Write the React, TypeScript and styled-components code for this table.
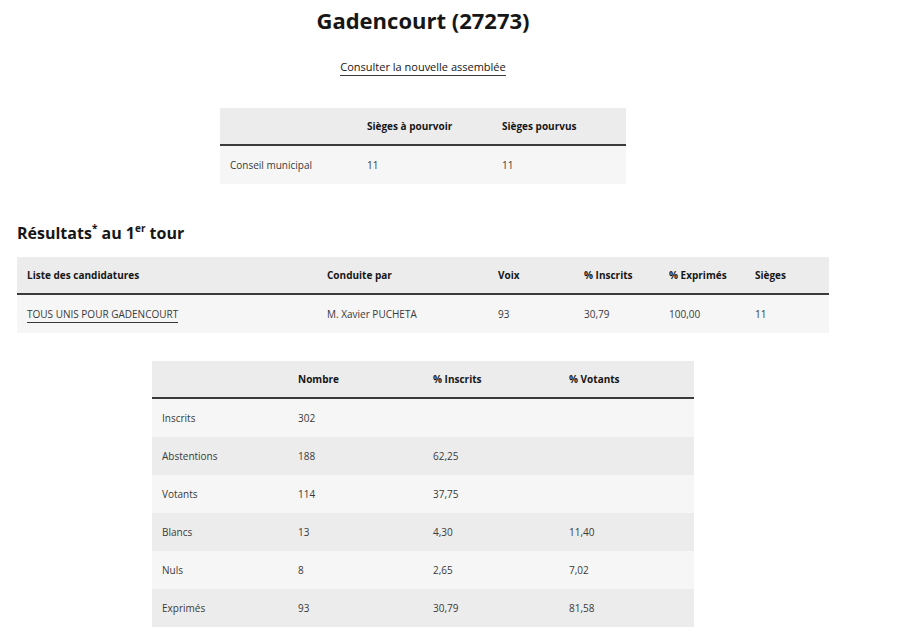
import React from 'react';
import styled, { createGlobalStyle } from 'styled-components';

const GlobalStyle = createGlobalStyle`
  body {
    margin: 0;
    background: #ffffff;
    font-family: 'Open Sans', 'Noto Sans', sans-serif;
    color: #3a3a3a;
  }
`;

type Col = { label: string; width: number };

const sieges: Col[] = [
  { label: '', width: 137 },
  { label: 'Sièges à pourvoir', width: 135 },
  { label: 'Sièges pourvus', width: 134 },
];

const listes: Col[] = [
  { label: 'Liste des candidatures', width: 300 },
  { label: 'Conduite par', width: 171 },
  { label: 'Voix', width: 86 },
  { label: '% Inscrits', width: 85 },
  { label: '% Exprimés', width: 86 },
  { label: 'Sièges', width: 84 },
];

const participation: Col[] = [
  { label: '', width: 136 },
  { label: 'Nombre', width: 135 },
  { label: '% Inscrits', width: 136 },
  { label: '% Votants', width: 135 },
];

const participationRows = [
  ['Inscrits', '302', '', ''],
  ['Abstentions', '188', '62,25', ''],
  ['Votants', '114', '37,75', ''],
  ['Blancs', '13', '4,30', '11,40'],
  ['Nuls', '8', '2,65', '7,02'],
  ['Exprimés', '93', '30,79', '81,58'],
];

const Head = ({ cols }: { cols: Col[] }) => (
  <>
    <colgroup>
      {cols.map((c, i) => (
        <col key={i} style={{ width: c.width }} />
      ))}
    </colgroup>
    <thead>
      <tr>
        {cols.map((c, i) => (
          <Th key={i}>{c.label}</Th>
        ))}
      </tr>
    </thead>
  </>
);

const App = () => {
  return (
    <>
      <GlobalStyle />
      <Page>
        <Title>Gadencourt (27273)</Title>
        <LinkRow>
          <TextLink href='#'>Consulter la nouvelle assemblée</TextLink>
        </LinkRow>

        <Table $width={406}>
          <Head cols={sieges} />
          <tbody>
            <Row $even={false}>
              <Td>Conseil municipal</Td>
              <Td>11</Td>
              <Td>11</Td>
            </Row>
          </tbody>
        </Table>

        <Heading>
          Résultats<sup>*</sup> au 1<sup>er</sup> tour
        </Heading>

        <Table $width={812}>
          <Head cols={listes} />
          <tbody>
            <Row $even={false}>
              <Td>
                <CellLink href='#'>TOUS UNIS POUR GADENCOURT</CellLink>
              </Td>
              <Td>M. Xavier PUCHETA</Td>
              <Td>93</Td>
              <Td>30,79</Td>
              <Td>100,00</Td>
              <Td>11</Td>
            </Row>
          </tbody>
        </Table>

        <Table $width={542} $gap={28}>
          <Head cols={participation} />
          <tbody>
            {participationRows.map((r, i) => (
              <Row key={r[0]} $even={i % 2 === 1}>
                {r.map((v, j) => (
                  <Td key={j}>{v}</Td>
                ))}
              </Row>
            ))}
          </tbody>
        </Table>
      </Page>
    </>
  );
};

export default App;

const Page = styled.main`
  width: 812px;
  margin-left: 17px;
  padding-top: 5px;
  display: flex;
  flex-direction: column;
  align-items: center;
`;

const Title = styled.h1`
  margin: 0;
  font-size: 22px;
  line-height: 30px;
  font-weight: 700;
  color: #161616;
`;

const LinkRow = styled.div`
  margin-top: 22px;
  margin-bottom: 33px;
  line-height: 16px;
`;

const TextLink = styled.a`
  font-size: 11px;
  line-height: 16px;
  color: #161616;
  text-decoration: none;
  border-bottom: 1px solid #3a3a3a;
  padding-bottom: 1px;
`;

const Heading = styled.h2`
  align-self: flex-start;
  margin: 37px 0 12px;
  font-size: 16px;
  line-height: 24px;
  font-weight: 700;
  color: #161616;

  sup {
    font-size: 10px;
    line-height: 0;
    vertical-align: 7px;
  }
`;

const Table = styled.table<{ $width: number; $gap?: number }>`
  width: ${({ $width }) => $width}px;
  margin-top: ${({ $gap }) => $gap ?? 0}px;
  border-collapse: collapse;
  table-layout: fixed;
  font-size: 10px;
  line-height: 16px;
`;

const Th = styled.th`
  background: #ececec;
  color: #161616;
  font-weight: 700;
  text-align: left;
  padding: 10px 10px;
  border-bottom: 2px solid #3a3a3a;
  height: 36px;
  box-sizing: border-box;
`;

const Row = styled.tr<{ $even: boolean }>`
  background: ${({ $even }) => ($even ? '#ececec' : '#f6f6f6')};
`;

const Td = styled.td`
  padding: 11px 10px;
  height: 38px;
  box-sizing: border-box;
  color: #3a3a3a;
`;

const CellLink = styled.a`
  color: #3a3a3a;
  text-decoration: none;
  border-bottom: 1px solid #3a3a3a;
  padding-bottom: 1px;
`;
